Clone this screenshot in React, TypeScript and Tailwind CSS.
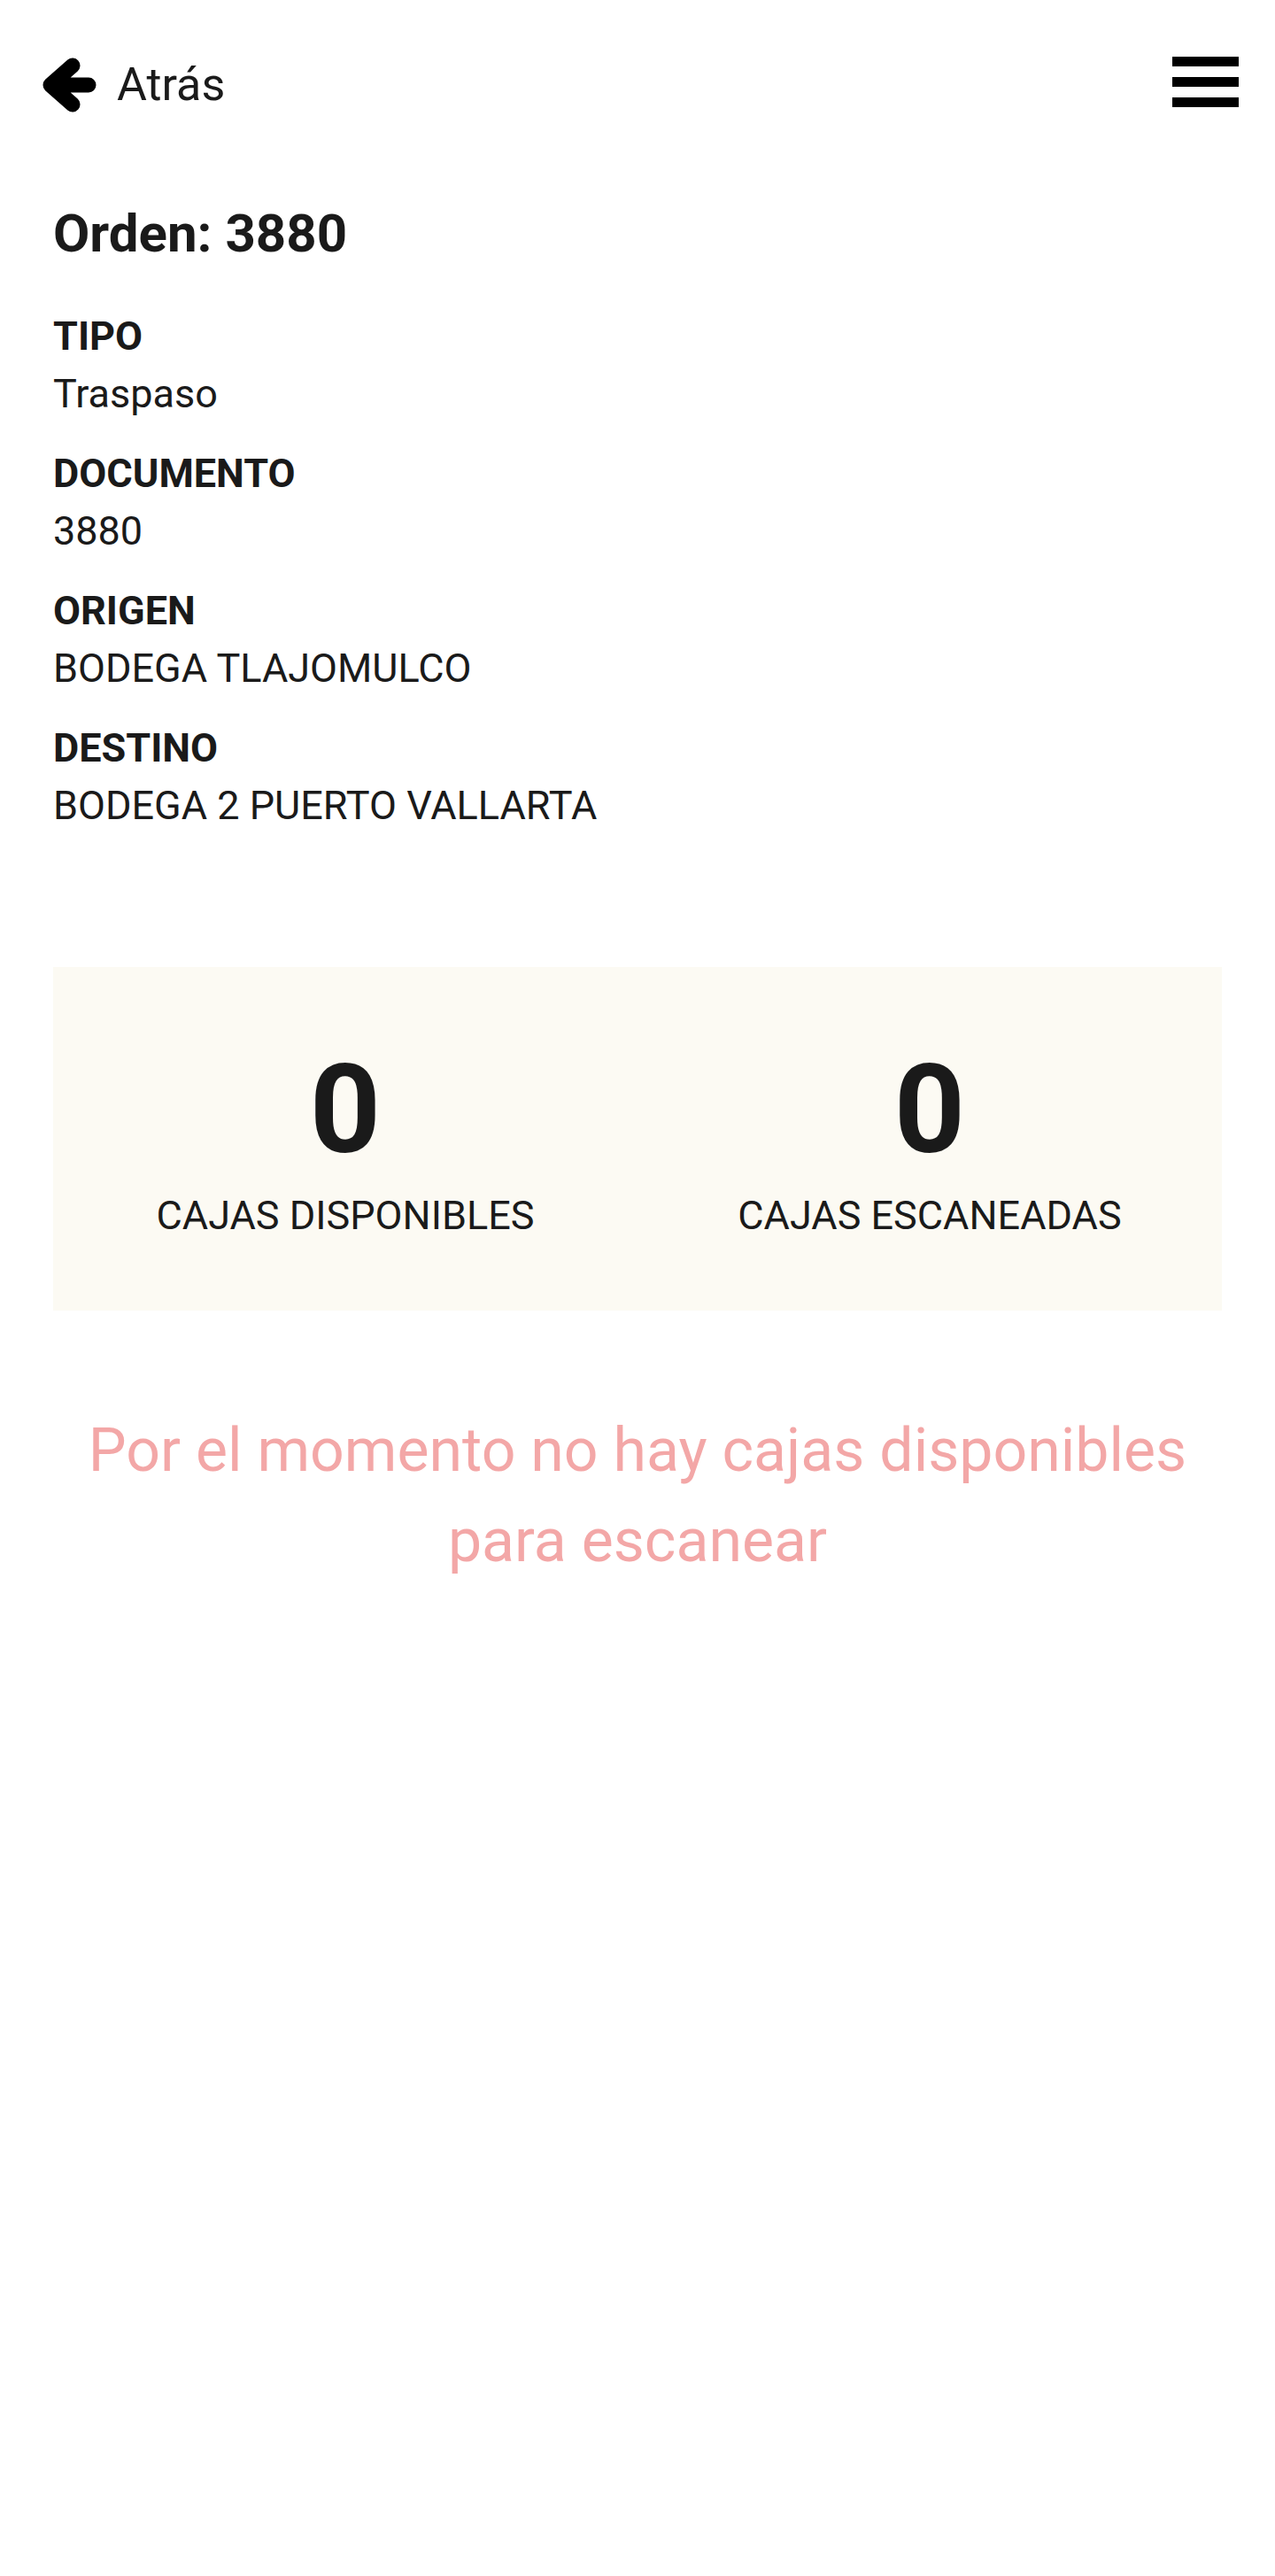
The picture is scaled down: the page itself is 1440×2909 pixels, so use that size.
import React from 'react'

const fields = [
  { label: 'TIPO', value: 'Traspaso' },
  { label: 'DOCUMENTO', value: '3880' },
  { label: 'ORIGEN', value: 'BODEGA TLAJOMULCO' },
  { label: 'DESTINO', value: 'BODEGA 2 PUERTO VALLARTA' },
]

function BackArrow() {
  return (
    <svg width="64" height="64" viewBox="0 0 64 64" fill="none" className="shrink-0">
      <path
        d="M36 10 L11 32 L36 54 M11 32 H54"
        stroke="#000"
        strokeWidth="17"
        strokeLinecap="round"
        strokeLinejoin="round"
      />
    </svg>
  )
}

function Stat({ count, label }: { count: number; label: string }) {
  return (
    <div className="flex flex-col items-center">
      <span className="text-[140px] leading-[164px] font-bold text-[#1a1a1a]">{count}</span>
      <span className="mt-[5px] text-[45px] leading-[65px] text-[#1a1a1a]">{label}</span>
    </div>
  )
}

export default function App() {
  return (
    <div
      className="min-h-[2909px] bg-white"
      style={{ fontFamily: 'Roboto, "Noto Sans", "Liberation Sans", sans-serif' }}
    >
      {/* barra superior */}
      <header className="flex items-start justify-between pt-[64px] pl-[46px] pr-[41px]">
        <button className="flex items-start gap-[22px]">
          <BackArrow />
          <span className="text-[52px] leading-[64px] text-[#1a1a1a]">Atrás</span>
        </button>
        <button className="flex flex-col gap-[12px] w-[75px]">
          <span className="block h-[11px] w-full bg-black" />
          <span className="block h-[11px] w-full bg-black" />
          <span className="block h-[11px] w-full bg-black" />
        </button>
      </header>

      <main className="px-[60px] pt-[98px]">
        <h1 className="text-[60px] leading-[76px] font-bold text-[#1a1a1a]">Orden: 3880</h1>

        <div className="mt-[45px] flex flex-col gap-[25px]">
          {fields.map((f) => (
            <div key={f.label} className="flex flex-col">
              <span className="text-[45px] leading-[65px] font-bold text-[#1a1a1a]">{f.label}</span>
              <span className="text-[45px] leading-[65px] text-[#1a1a1a]">{f.value}</span>
            </div>
          ))}
        </div>

        <div className="mt-[150px] grid grid-cols-2 bg-[#fcfaf3] pt-[79px] pb-[75px]">
          <Stat count={0} label="CAJAS DISPONIBLES" />
          <Stat count={0} label="CAJAS ESCANEADAS" />
        </div>

        <p className="mt-[107px] text-center text-[68px] leading-[102px] text-[#f3a7a7]">
          Por el momento no hay cajas disponibles para escanear
        </p>
      </main>
    </div>
  )
}
